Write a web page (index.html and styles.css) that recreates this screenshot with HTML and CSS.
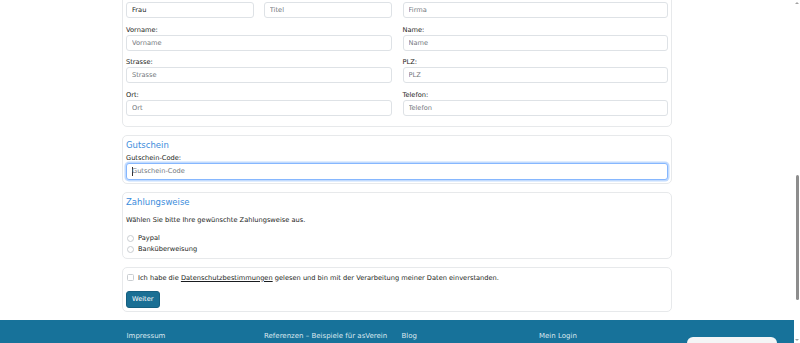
FILE: index.html
```html
<!DOCTYPE html>
<html lang="de">
<head>
  <meta charset="UTF-8" />
  <meta name="viewport" content="width=device-width, initial-scale=1" />
  <title>Anmeldung</title>
  <link rel="stylesheet" href="styles.css">
</head>
<body>

  <div class="page">
    <main class="container">

      <section class="card card-address">
        <div class="grid">
          <div class="pair">
            <div class="field">
              <input type="text" value="Frau" />
            </div>
            <div class="field">
              <input type="text" placeholder="Titel" />
            </div>
          </div>
          <div class="field">
            <input type="text" placeholder="Firma" />
          </div>
          <div class="field">
            <label>Vorname:</label>
            <input type="text" placeholder="Vorname" />
          </div>
          <div class="field">
            <label>Name:</label>
            <input type="text" placeholder="Name" />
          </div>
          <div class="field">
            <label>Strasse:</label>
            <input type="text" placeholder="Strasse" />
          </div>
          <div class="field">
            <label>PLZ:</label>
            <input type="text" placeholder="PLZ" />
          </div>
          <div class="field">
            <label>Ort:</label>
            <input type="text" placeholder="Ort" />
          </div>
          <div class="field">
            <label>Telefon:</label>
            <input type="text" placeholder="Telefon" />
          </div>
        </div>
      </section>

      <section class="card">
        <h2>Gutschein</h2>
        <div class="field">
          <label>Gutschein-Code:</label>
          <input type="text" class="focus" placeholder="Gutschein-Code" />
        </div>
      </section>

      <section class="card">
        <h2>Zahlungsweise</h2>
        <p class="hint">Wählen Sie bitte Ihre gewünschte Zahlungsweise aus.</p>
        <div class="options">
          <label class="option"><span class="radio"></span>Paypal</label>
          <label class="option"><span class="radio"></span>Banküberweisung</label>
        </div>
      </section>

      <section class="card card-consent">
        <label class="consent"><span class="box"></span>Ich habe die <a href="#">Datenschutzbestimmungen</a> gelesen und bin mit der Verarbeitung meiner Daten einverstanden.</label>
        <button class="btn">Weiter</button>
      </section>

    </main>

    <footer>
      <div class="footer-row">
        <a href="#">Impressum</a>
        <a href="#">Referenzen – Beispiele für asVerein</a>
        <a href="#">Blog</a>
        <a href="#">Mein Login</a>
      </div>
      <div class="widget"></div>
    </footer>
  </div>

  <div class="scrollbar">
    <span class="arrow up"></span>
    <span class="thumb"></span>
    <span class="arrow down"></span>
  </div>

</body>
</html>
```

FILE: styles.css
```css
:root {
  --text: #1a1d20;
  --muted: #72777c;
  --border: #dee2e6;
  --blue: #3a8cdc;
  --footer: #17729a;
  --radius: 3px;
}

* {
  box-sizing: border-box;
  margin: 0;
  padding: 0;
}

html, body {
  height: 100%;
  overflow: hidden;
}

body {
  font-family: 'DejaVu Sans', sans-serif;
  font-size: 6.65px;
  line-height: 10px;
  color: var(--text);
  background: #fff;
}

.page {
  margin-right: 6px;
  margin-top: -2px;
}

.container {
  width: 550px;
  margin: 0 auto;
}

.card {
  border: 1px solid #e7e9eb;
  border-radius: 5px;
  padding: 3px;
  margin-bottom: 8px;
}

.card-address {
  border-top-left-radius: 0;
  border-top-right-radius: 0;
  padding-bottom: 10px;
}

.grid {
  display: grid;
  grid-template-columns: 1fr 1fr;
  column-gap: 11px;
  row-gap: 6.5px;
}

.pair {
  display: grid;
  grid-template-columns: 1fr 1fr;
  column-gap: 10px;
}

.field label {
  display: block;
  line-height: 10px;
}

input {
  display: block;
  width: 100%;
  height: 16px;
  border: 1px solid var(--border);
  border-radius: var(--radius);
  padding: 0 5px;
  font: inherit;
  color: var(--text);
  background: #fff;
  outline: none;
}

input::placeholder {
  color: var(--muted);
}

input.focus {
  height: 17px;
  border-color: #86b7fe;
  box-shadow: 0 0 0 1.5px rgba(13, 110, 253, 0.25);
  background-image: linear-gradient(#333, #333);
  background-size: 1px 9px;
  background-position: 5px center;
  background-repeat: no-repeat;
}

h2 {
  font-size: 8.5px;
  line-height: 13px;
  font-weight: normal;
  color: var(--blue);
  margin-bottom: 1px;
}

.hint {
  margin-top: 6px;
}

.options {
  margin-top: 8px;
}

.option {
  display: flex;
  align-items: center;
  gap: 4px;
  line-height: 11px;
}

.radio, .box {
  width: 7px;
  height: 7px;
  border: 1px solid #c9cdd1;
  border-radius: 50%;
  background: #fff;
  flex: none;
  margin-left: 1px;
}

.box {
  border-radius: 1.5px;
}

.card-consent {
  padding-top: 5px;
}

.consent {
  display: block;
  line-height: 10px;
}

.consent .box {
  display: inline-block;
  vertical-align: -1px;
  margin-right: 4px;
}

.consent a {
  color: var(--text);
}

.btn {
  display: block;
  margin-top: 8px;
  height: 17px;
  padding: 0 5px;
  border: 1px solid #155f80;
  border-radius: var(--radius);
  background: #1a6f94;
  color: #fff;
  font: inherit;
}

footer {
  position: relative;
  background: var(--footer);
  height: 60px;
  padding-top: 11px;
}

.footer-row {
  width: 550px;
  margin: 0 auto;
  padding-left: 4.5px;
  display: grid;
  grid-template-columns: repeat(4, 137.5px);
}

.footer-row a {
  color: #dbe8ef;
  text-decoration: none;
  font-size: 7px;
}

.widget {
  position: absolute;
  left: 687px;
  top: 17px;
  width: 90px;
  height: 30px;
  border-radius: 6px;
  background: #f4f5f6;
}

.scrollbar {
  position: fixed;
  top: 0;
  right: 0;
  width: 6px;
  height: 100%;
  background: #fff;
}

.thumb {
  position: absolute;
  left: 1.5px;
  top: 175px;
  width: 3px;
  height: 125px;
  border-radius: 2px;
  background: #8d8d8d;
}

.arrow {
  position: absolute;
  left: 1px;
  width: 0;
  height: 0;
  border-left: 2px solid transparent;
  border-right: 2px solid transparent;
}

.arrow.up {
  top: 2px;
  border-bottom: 2px solid #a3a3a3;
}

.arrow.down {
  bottom: 2px;
  border-top: 2px solid #a3a3a3;
}
```
